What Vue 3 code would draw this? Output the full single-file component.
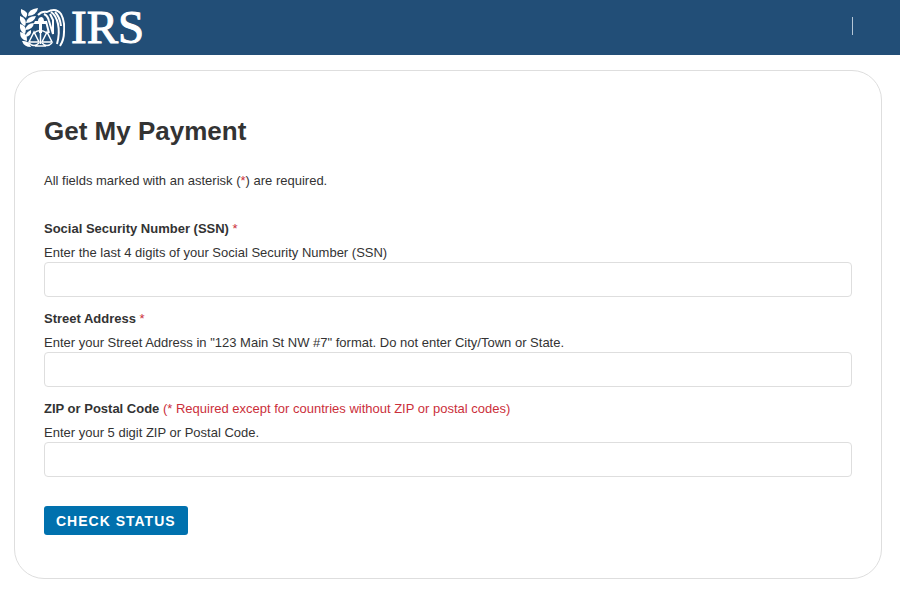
<script setup>
import { reactive } from 'vue'

const fields = [
  {
    id: 'ssn',
    label: 'Social Security Number (SSN)',
    note: '*',
    hint: 'Enter the last 4 digits of your Social Security Number (SSN)'
  },
  {
    id: 'street',
    label: 'Street Address',
    note: '*',
    hint: 'Enter your Street Address in "123 Main St NW #7" format. Do not enter City/Town or State.'
  },
  {
    id: 'zip',
    label: 'ZIP or Postal Code',
    note: '(* Required except for countries without ZIP or postal codes)',
    hint: 'Enter your 5 digit ZIP or Postal Code.'
  }
]

const form = reactive({ ssn: '', street: '', zip: '' })
</script>

<template>
  <div class="page">
    <header class="topbar">
      <div class="logo">
        <svg class="emblem" viewBox="0 0 45 40" aria-hidden="true">
          <!-- laurel branch -->
          <g class="solid">
            <path d="M8 8Q8 1 18 0Q17 7 8 8Z" />
            <path d="M6 10Q0 7 1 1Q10 4 6 10Z" />
            <path d="M6 15Q7 8 16 8Q14 15 6 15Z" />
            <path d="M5 18Q-1 15 0 8Q8 11 5 18Z" />
            <path d="M5 22Q7 15 14 15Q13 22 5 22Z" />
            <path d="M5 26Q-1 23 0 16Q8 18 5 26Z" />
            <path d="M5 29Q6 24 11 22Q12 28 5 29Z" />
            <path d="M7 33Q0 32 0 24Q8 25 7 33Z" />
            <path d="M11 39Q4 39 2 33Q9 32 11 39Z" />
          </g>
          <!-- eagle head and wing -->
          <path class="solid" d="M14 15L15 13H18Q18 9 22 9Q24 10 24 13H26V16H22V25H19V16H14Z" />
          <g class="line">
            <path d="M18 7Q22 3 27 4Q36 -1 41 6Q45 13 44 24Q44 32 40 38" />
            <path d="M24 6Q28 8 29 13L33 26V12L30 6" />
            <path d="M31 4Q36 7 38 16Q40 25 37 36" />
            <path d="M35 4Q40 9 41 18" />
            <path d="M26 13L29 25" />
          </g>
          <!-- scales -->
          <g class="line thin">
            <path d="M20.500 24V36M14 25Q20 20 27 25" />
            <path d="M14 24L9 34H19ZM27 24L22 34H32Z" />
            <path d="M9 35Q14 40 19 35M22 35Q27 40 32 35M15 38H26" />
          </g>
        </svg>
        <span class="logo-text">IRS</span>
      </div>
      <span class="divider"></span>
    </header>

    <main class="card">
      <h1>Get My Payment</h1>
      <p class="intro">All fields marked with an asterisk (<span class="required">*</span>) are required.</p>

      <form @submit.prevent>
        <div v-for="field in fields" :key="field.id" class="field">
          <label :for="field.id">{{ field.label }} <span class="required">{{ field.note }}</span></label>
          <p :id="field.id + '-hint'" class="hint">{{ field.hint }}</p>
          <input :id="field.id" v-model="form[field.id]" type="text" :aria-describedby="field.id + '-hint'" />
        </div>

        <button type="submit">CHECK STATUS</button>
      </form>
    </main>
  </div>
</template>

<style>
body {
  margin: 0;
  background: #fff;
}
</style>

<style scoped>
.page {
  font-family: "Liberation Sans", Arial, sans-serif;
  font-size: 13px;
  line-height: 20px;
  color: #333;
}

.topbar {
  display: flex;
  align-items: center;
  justify-content: space-between;
  height: 55px;
  padding: 0 47px 0 20px;
  background: #224e77;
}

.logo {
  display: flex;
  align-items: center;
  gap: 6px;
  color: #fff;
}

.emblem {
  width: 45px;
  height: 40px;
}

.solid {
  fill: #fff;
}

.line {
  fill: none;
  stroke: #fff;
  stroke-width: 2;
}

.thin {
  stroke-width: 1.5;
}

.logo-text {
  font-family: "Liberation Serif", "Times New Roman", serif;
  font-size: 47px;
  line-height: 55px;
  -webkit-text-stroke: 1px #fff;
}

.divider {
  width: 1px;
  height: 18px;
  margin-bottom: 4px;
  background: #b5c6d6;
}

.card {
  margin: 15px 18px 23px 14px;
  padding: 44px 29px 43px;
  border: 1px solid #dedede;
  border-radius: 30px;
}

h1 {
  margin: 0;
  font-size: 26px;
  line-height: 32px;
}

.intro {
  margin: 24px 0 28px;
}

.field {
  margin-bottom: 12px;
}

label {
  display: block;
  font-weight: bold;
}

.required {
  font-weight: normal;
  color: #cb2f3b;
}

.hint {
  margin: 5px 0 0;
  line-height: 18px;
}

input {
  display: block;
  box-sizing: border-box;
  width: 100%;
  height: 35px;
  padding: 0 10px;
  border: 1px solid #dedede;
  border-radius: 4px;
  background: #fff;
  font: inherit;
  color: inherit;
}

button {
  display: block;
  height: 29px;
  margin-top: 29px;
  padding: 0 12px;
  border: 0;
  border-radius: 3px;
  background: #0071ae;
  color: #fff;
  font-family: inherit;
  font-size: 14px;
  font-weight: bold;
  letter-spacing: 1px;
  cursor: pointer;
}
</style>
